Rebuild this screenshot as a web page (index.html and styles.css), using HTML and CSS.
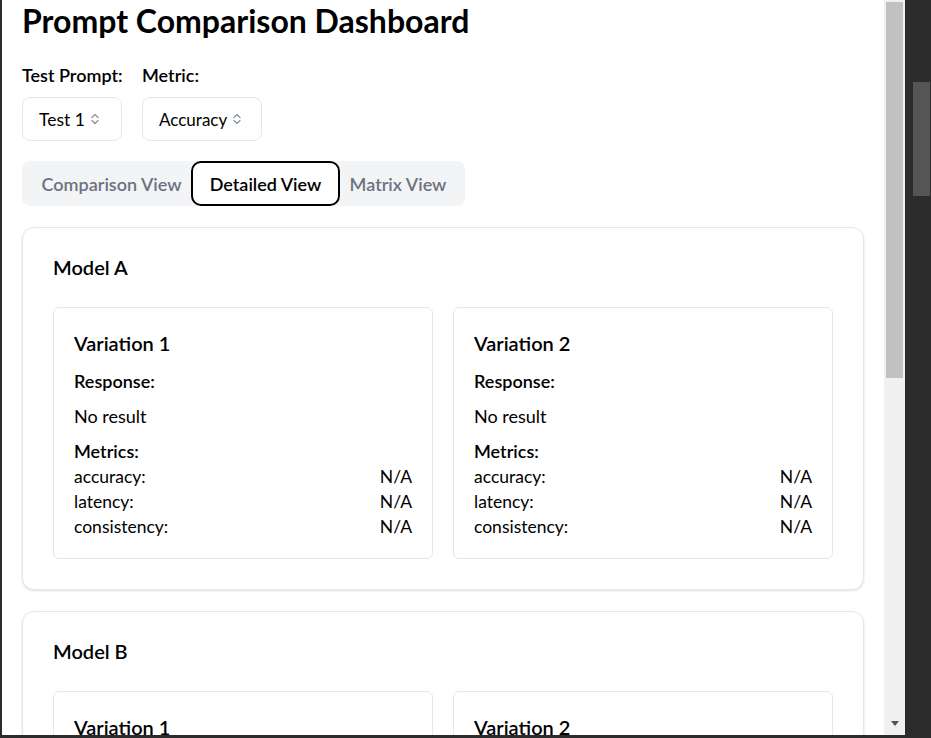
FILE: index.html
```html
<!DOCTYPE html>
<html lang="en">
<head>
<meta charset="utf-8">
<title>Prompt Comparison Dashboard</title>
<link rel="stylesheet" href="styles.css">
</head>
<body>
<div class="frame">
  <div class="page">
    <h1 class="title">Prompt Comparison Dashboard</h1>

    <div class="controls">
      <div class="field field-prompt">
        <label class="field-label">Test Prompt:</label>
        <div class="select select-prompt">
          <span>Test 1</span>
          <svg class="chev" width="10" height="14" viewBox="0 0 10 14"><path d="M2 5.5 L5 2.5 L8 5.5 M2 8.5 L5 11.5 L8 8.5" fill="none" stroke="#8a8f98" stroke-width="1.2" stroke-linecap="round" stroke-linejoin="round"/></svg>
        </div>
      </div>
      <div class="field field-metric">
        <label class="field-label">Metric:</label>
        <div class="select select-metric">
          <span>Accuracy</span>
          <svg class="chev" width="10" height="14" viewBox="0 0 10 14"><path d="M2 5.5 L5 2.5 L8 5.5 M2 8.5 L5 11.5 L8 8.5" fill="none" stroke="#8a8f98" stroke-width="1.2" stroke-linecap="round" stroke-linejoin="round"/></svg>
        </div>
      </div>
    </div>

    <div class="tabs">
      <div class="tab tab-first">Comparison View</div>
      <div class="tab tab-active">Detailed View</div>
      <div class="tab tab-last">Matrix View</div>
    </div>

    <div class="model-card">
      <h2 class="model-title">Model A</h2>
      <div class="variations">
        <div class="var-card">
          <h3 class="var-title">Variation 1</h3>
          <div class="sub-title">Response:</div>
          <p class="response">No result</p>
          <div class="sub-title metrics-title">Metrics:</div>
          <div class="metric-row"><span>accuracy:</span><span>N/A</span></div>
          <div class="metric-row"><span>latency:</span><span>N/A</span></div>
          <div class="metric-row"><span>consistency:</span><span>N/A</span></div>
        </div>
        <div class="var-card">
          <h3 class="var-title">Variation 2</h3>
          <div class="sub-title">Response:</div>
          <p class="response">No result</p>
          <div class="sub-title metrics-title">Metrics:</div>
          <div class="metric-row"><span>accuracy:</span><span>N/A</span></div>
          <div class="metric-row"><span>latency:</span><span>N/A</span></div>
          <div class="metric-row"><span>consistency:</span><span>N/A</span></div>
        </div>
      </div>
    </div>

    <div class="model-card">
      <h2 class="model-title">Model B</h2>
      <div class="variations">
        <div class="var-card">
          <h3 class="var-title">Variation 1</h3>
          <div class="sub-title">Response:</div>
          <p class="response">No result</p>
          <div class="sub-title metrics-title">Metrics:</div>
          <div class="metric-row"><span>accuracy:</span><span>N/A</span></div>
          <div class="metric-row"><span>latency:</span><span>N/A</span></div>
          <div class="metric-row"><span>consistency:</span><span>N/A</span></div>
        </div>
        <div class="var-card">
          <h3 class="var-title">Variation 2</h3>
          <div class="sub-title">Response:</div>
          <p class="response">No result</p>
          <div class="sub-title metrics-title">Metrics:</div>
          <div class="metric-row"><span>accuracy:</span><span>N/A</span></div>
          <div class="metric-row"><span>latency:</span><span>N/A</span></div>
          <div class="metric-row"><span>consistency:</span><span>N/A</span></div>
        </div>
      </div>
    </div>
  </div>
  <div class="vscroll">
    <div class="vthumb"></div>
    <div class="varrow"></div>
  </div>
</div>
<div class="outer-scroll">
  <div class="outer-thumb"></div>
</div>
</body>
</html>
```

FILE: styles.css
```css
* { box-sizing: border-box; }

html, body {
  margin: 0;
  padding: 0;
  height: 738px;
  overflow: hidden;
}

body {
  display: flex;
  align-items: flex-start;
  background: #2b2b2b;
  font-family: "Lato", "Noto Sans", sans-serif;
  color: #000;
}

.frame {
  width: 905px;
  height: 735px;
  border-left: 2px solid #2b2b2b;
  display: flex;
  background: #fff;
}

.page {
  flex: 1;
  overflow: hidden;
  padding: 2px 20px 20px 20px;
}

.title {
  margin: 0;
  font-size: 32px;
  line-height: 38px;
  font-weight: 700;
}

.controls {
  display: flex;
  gap: 20px;
  margin-top: 23px;
}

.field { display: flex; flex-direction: column; }
.field-prompt { width: 100px; }
.field-metric { width: 120px; }

.field-label {
  font-size: 18px;
  line-height: 24px;
  font-weight: 600;
  white-space: nowrap;
  margin-bottom: 10px;
}

.select {
  height: 44px;
  border: 1px solid #e5e7eb;
  border-radius: 8px;
  display: flex;
  align-items: center;
  justify-content: space-between;
  gap: 5px;
  padding: 0 21px 0 16px;
  font-size: 17.5px;
  white-space: nowrap;
}
.select-metric { font-size: 17px; }
.chev { flex: none; }

.tabs {
  display: flex;
  width: 443px;
  height: 45px;
  margin-top: 20px;
  background: #f3f4f6;
  border-radius: 8px;
}

.tab {
  display: flex;
  align-items: center;
  justify-content: center;
  font-size: 18px;
  font-weight: 600;
  color: #6b7280;
  white-space: nowrap;
}
.tab-first { width: 169px; padding-left: 10px; }
.tab-active {
  width: 149px;
  color: #000;
  background: #fff;
  border: 2px solid #000;
  border-radius: 10px;
}
.tab-last { width: 125px; padding-right: 9px; }

.model-card {
  margin-top: 21px;
  border: 1px solid #e5e7eb;
  border-radius: 12px;
  background: #fff;
  padding: 25px 30px 30px 30px;
  box-shadow: 0 1px 3px rgba(0,0,0,0.08), 0 1px 2px rgba(0,0,0,0.05);
}

.model-title {
  margin: 0 0 26px 0;
  font-size: 20px;
  line-height: 28px;
  font-weight: 600;
}

.variations {
  display: grid;
  grid-template-columns: 1fr 1fr;
  gap: 20px;
}

.var-card {
  border: 1px solid #e5e7eb;
  border-radius: 6px;
  padding: 21px 20px 19px 20px;
}

.var-title {
  margin: 0 0 12px 0;
  font-size: 20px;
  line-height: 28px;
  font-weight: 600;
}

.sub-title {
  font-size: 18px;
  line-height: 24px;
  font-weight: 600;
}
.metrics-title { margin-bottom: 1px; }

.response {
  margin: 11px 0 11px 0;
  font-size: 18px;
  line-height: 24px;
}

.metric-row {
  display: flex;
  justify-content: space-between;
  font-size: 17.5px;
  line-height: 25px;
}

.vscroll {
  width: 21px;
  flex: none;
  background: #f0f0f0;
  display: flex;
  flex-direction: column;
  align-items: center;
  padding-top: 2px;
}
.vthumb {
  width: 17px;
  height: 376px;
  background: #c1c1c1;
}
.varrow {
  margin-top: auto;
  margin-bottom: 9px;
  width: 0;
  height: 0;
  border-left: 4px solid transparent;
  border-right: 4px solid transparent;
  border-top: 5px solid #505050;
}

.outer-scroll {
  flex: 1;
  height: 738px;
  padding: 82px 1px 0 8px;
}
.outer-thumb {
  height: 114px;
  background: #555555;
}
```
